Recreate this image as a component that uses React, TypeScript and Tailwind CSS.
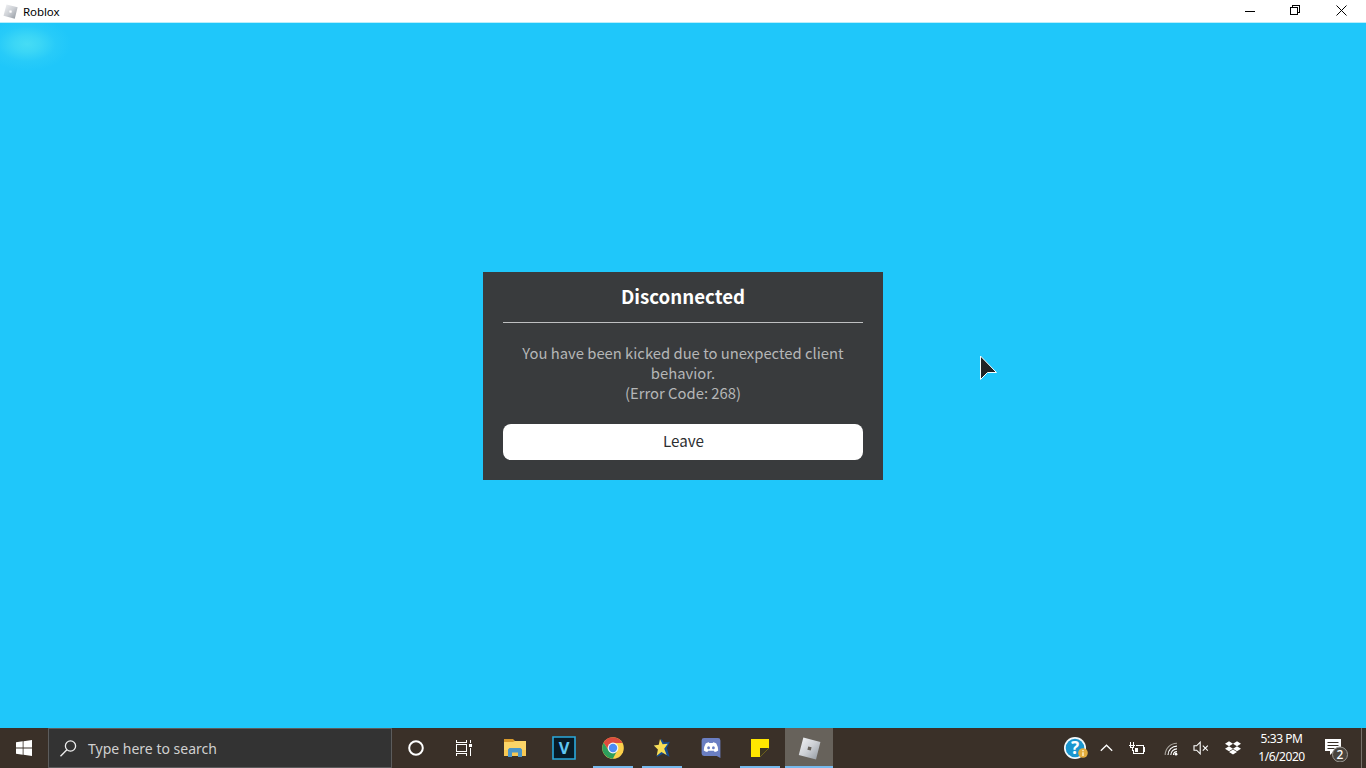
import type { ReactNode } from "react";

interface TaskItemProps {
  children: ReactNode;
  running?: boolean;
  active?: boolean;
}

function RobloxIcon({ size, id }: { size: number; id: string }) {
  return (
    <svg width={size} height={size} viewBox="0 0 24 24">
      <defs>
        <linearGradient id={id} x1="0" y1="0" x2="1" y2="1">
          <stop offset="0" stopColor="#f4f5f7" />
          <stop offset="0.5" stopColor="#cdd0d5" />
          <stop offset="1" stopColor="#8d949c" />
        </linearGradient>
      </defs>
      <path
        fillRule="evenodd"
        fill={`url(#${id})`}
        d="M5.6.6 23.4 5.2 18.8 23.4.8 18.8ZM10.7 9.8 9.8 13.3 13.3 14.2 14.2 10.7Z"
      />
    </svg>
  );
}

function TitleBar() {
  return (
    <header className="flex h-[23px] shrink-0 items-center justify-between border-b border-[#b9eefb] bg-white">
      <div className="flex items-center gap-[5px] pt-px pl-[3px]">
        <RobloxIcon size={15} id="title-logo" />
        <span className="text-[11.5px] leading-[22px] tracking-[-0.1px] text-black">Roblox</span>
      </div>
      <div className="flex h-full text-black">
        <button className="flex h-[21px] w-[46px] items-center justify-center">
          <svg width="10" height="10" shapeRendering="crispEdges">
            <path d="M0 5.5H10" stroke="currentColor" />
          </svg>
        </button>
        <button className="flex h-5 w-[44px] items-center justify-center">
          <svg width="10" height="10" fill="none" stroke="currentColor" shapeRendering="crispEdges">
            <path d="M.5 2.5H7.5V9.5H.5ZM2.5 2.5V.5H9.5V7.5H7.5" />
          </svg>
        </button>
        <button className="flex h-[21px] w-[49px] items-center justify-center">
          <svg width="11" height="11" fill="none" stroke="currentColor">
            <path d="m.5.5 10 10m0-10-10 10" />
          </svg>
        </button>
      </div>
    </header>
  );
}

function DisconnectDialog() {
  return (
    <section className="h-[208px] w-[400px] bg-[#393b3d] px-5 text-center font-['Noto_Sans_CJK_SC',sans-serif]">
      <h1 className="h-[51px] border-b border-[#bfc0c1] text-[18.7px] leading-[48px] font-bold text-white">
        Disconnected
      </h1>
      <p className="mt-5 text-[14.8px] leading-5 text-[#b5b6b7]">
        <span className="whitespace-nowrap">You have been kicked due to unexpected client</span>
        <br />
        behavior.
        <br />
        (Error Code: 268)
      </p>
      <button className="mt-[21px] h-9 w-full rounded-lg bg-white pb-[3px] pl-px text-[15.2px] leading-8 text-[#2c2e30]">
        Leave
      </button>
    </section>
  );
}

function Cursor() {
  return (
    <svg className="absolute top-[354px] left-[979px]" width="20" height="28" viewBox="0 0 20 28">
      <path d="M1.5 2v23.5L8.5 18.5H17.5Z" fill="#202426" stroke="#f4ffff" />
    </svg>
  );
}

function TaskItem({ children, running, active }: TaskItemProps) {
  return (
    <button
      className={`flex h-10 w-12 flex-col items-center ${active ? "bg-[#67625b]" : ""}`}
    >
      <span className="flex h-[38px] items-center justify-center pt-0.5">{children}</span>
      {(running || active) && (
        <span className={`h-0.5 bg-[#76b9ed] ${active ? "w-12" : "w-10"}`} />
      )}
    </button>
  );
}

function ExplorerIcon() {
  return (
    <svg width="22" height="20" viewBox="0 0 22 20">
      <path d="M0 1h9l2 2h11v6H0Z" fill="#d99a2b" />
      <path d="M0 4h9l2-1h11v15H0Z" fill="#fbd568" />
      <path d="M0 12h22v6H0Z" fill="#f7c854" />
      <path d="M4 19v-7.5L5.5 10h11l1.5 1.5V19h-4v-4.5H8V19Z" fill="#4b96c9" />
    </svg>
  );
}

function ChromeIcon() {
  return (
    <svg width="22" height="22" viewBox="0 0 22 22">
      <circle cx="11" cy="11" r="10.8" fill="#fcd04b" />
      <path d="M1.6 5.7A10.8 10.8 0 0 1 20.5 6H11L6.7 13.5Z" fill="#dd4b3e" />
      <path d="M1.6 5.7 6.7 13.5 11 16l4.3-2.5L10.8 21.8A10.8 10.8 0 0 1 1.6 5.7Z" fill="#2d9e5c" />
      <circle cx="11" cy="11" r="5.4" fill="#f5f5f5" />
      <circle cx="11" cy="11" r="4.2" fill="#4c8bf5" />
    </svg>
  );
}

function StarIcon() {
  return (
    <svg width="18" height="20" viewBox="0 0 18 20">
      <path d="M8.5.8 11 4.6 17 3.8 13.8 9.9 16.6 19 10.5 15.6 4 19 5.4 11.5 1 7.5 6.5 6.8Z" fill="#164c91" />
      <path d="m7 1 2.6 5.3 5.2-.6-3.6 5 2.5 6.2-5.3-3-4.7 3.8 1.2-6.3L.8 7.5l5-.8Z" fill="#f8dd54" />
    </svg>
  );
}

function DiscordIcon() {
  return (
    <svg width="20" height="20" viewBox="0 0 20 20">
      <path d="M3 0h14a2.4 2.4 0 0 1 2.4 2.4V20l-3.6-2H3A2.4 2.4 0 0 1 .6 15.6V2.4A2.4 2.4 0 0 1 3 0Z" fill="#6b7fc3" />
      <path
        d="M4.7 5.4Q6 4.4 7.8 4.2l.5.8h3.4l.5-.8q1.8.2 3.1 1.2Q17.4 9 17.2 12.5q-1.5 1.3-3.5 1.5l-.8-1.2H7.1L6.3 14Q4.3 13.8 2.8 12.5 2.6 9 4.7 5.4Z"
        fill="#fff"
      />
      <ellipse cx="7.6" cy="9.7" rx="1.4" ry="1.5" fill="#6b7fc3" />
      <ellipse cx="12.4" cy="9.7" rx="1.4" ry="1.5" fill="#6b7fc3" />
    </svg>
  );
}

function SearchBox() {
  return (
    <div className="flex h-10 w-[344px] items-center border border-[#5c5c5c] bg-[#333333] pl-[11px]">
      <svg width="17" height="17" viewBox="0 0 17 17" fill="none" stroke="#f0f0f0" strokeWidth="1.3">
        <circle cx="10.5" cy="6" r="5.1" />
        <path d="M6.9 9.7.5 16.2" />
      </svg>
      <span className="ml-[11px] text-[14px] whitespace-nowrap text-[#d0d0d0]">
        Type here to search
      </span>
    </div>
  );
}

function Tray() {
  return (
    <div className="ml-auto flex h-10 items-center text-white">
      <div className="flex w-[27px] justify-center">
        <svg width="25" height="24" viewBox="0 0 25 24">
          <circle cx="12" cy="12" r="11" fill="#f3fafd" />
          <circle cx="12" cy="12" r="9.3" fill="#1a96cf" />
          <text x="12" y="18" textAnchor="middle" fontSize="17" fontWeight="700" fill="#fff">?</text>
          <circle cx="20" cy="17" r="4.8" fill="#e4ad3e" />
          <path d="M20 14v1.3m0 1v3.8" stroke="#fff3ce" strokeWidth="1.4" />
        </svg>
      </div>
      <div className="flex w-[34px] justify-center">
        <svg width="13" height="8" viewBox="0 0 13 8" fill="none" stroke="currentColor" strokeWidth="1.3">
          <path d="M.8 6.8 6.5 1.2l5.7 5.6" />
        </svg>
      </div>
      <div className="flex w-[29px] justify-center">
        <svg width="17" height="13" viewBox="0 0 17 13" fill="none" stroke="currentColor" shapeRendering="crispEdges">
          <path d="M7 3.5H14.5V11.5H4.5V8M15.5 5V10" />
          <path d="M1.5 0V3M4.5 0V3M0 3.5H6M1.5 3.5V5.5H4.5V3.5M3.5 6V8.5" />
          <path d="M6 6h3v4H6Z" fill="currentColor" stroke="none" />
        </svg>
      </div>
      <div className="flex w-[37px] justify-center pt-0.5">
        <svg width="14" height="14" viewBox="0 0 14 14" fill="none" stroke="currentColor" strokeWidth="1.1">
          <path d="M1.2 13A11.8 11.8 0 0 1 13 1.2" stroke="#aaa59f" />
          <path d="M4 13A9 9 0 0 1 13 4.1M6.8 13A6.2 6.2 0 0 1 13 6.9M9.4 13a3.6 3.6 0 0 1 3.6-3.4" />
          <circle cx="12" cy="12.2" r="1.4" fill="currentColor" stroke="none" />
        </svg>
      </div>
      <div className="flex w-[23px] justify-center">
        <svg width="16" height="14" viewBox="0 0 16 14" fill="none" stroke="currentColor" strokeWidth="1.1">
          <path d="M1 4.8h2.6L7.2 1.2v11.6L3.6 9.2H1Z" />
          <path d="m9.8 4.7 5 5m0-5-5 5" />
        </svg>
      </div>
      <div className="flex w-[42px] justify-center">
        <svg width="16" height="14" viewBox="0 0 16 14" fill="currentColor">
          <path d="m4 .2 4 2.5-4 2.5-4-2.5ZM12 .2l4 2.5-4 2.5-4-2.5ZM4 5.2l4 2.5-4 2.5-4-2.5ZM12 5.2l4 2.5-4 2.5-4-2.5ZM4 11l4-2.5 4 2.5-4 2.6Z" />
        </svg>
      </div>
      <div className="flex w-[55px] flex-col pb-px text-center text-[12px] leading-[18px] tracking-[-0.45px] whitespace-nowrap">
        <span>5:33 PM</span>
        <span>1/6/2020</span>
      </div>
      <div className="flex w-[52px] justify-center pl-px">
        <svg width="26" height="28" viewBox="0 0 26 28">
          <path d="M2 5h16v12H11l-4 4v-4H2Z" fill="#fff" />
          <path d="M4.5 8.5h11M4.5 11.5h11M4.5 14.5h7" stroke="#3a3128" />
          <circle cx="17" cy="20.5" r="7.5" fill="#49443d" stroke="#9b9893" />
          <text x="17" y="24.7" textAnchor="middle" fontSize="12" fontWeight="500" fill="#fff">2</text>
        </svg>
      </div>
      <div className="mr-1 h-10 w-px bg-[#77716a]" />
    </div>
  );
}

function Taskbar() {
  return (
    <footer className="flex h-10 shrink-0 bg-[#3a3028]">
      <button className="flex w-12 items-center justify-center">
        <svg width="16" height="16" viewBox="0 0 16 16" fill="#fff">
          <path d="M0 2.2 6.7 1.3v6.2H0ZM7.5 1.2 16 0v7.5H7.5ZM0 8.4h6.7v6.3L0 13.8ZM7.5 8.4H16V16l-8.5-1.2Z" />
        </svg>
      </button>
      <SearchBox />
      <TaskItem>
        <svg width="16" height="16" fill="none" stroke="#fff" strokeWidth="2">
          <circle cx="8" cy="8" r="6.8" />
        </svg>
      </TaskItem>
      <TaskItem>
        <svg width="16" height="16" viewBox="0 0 16 16" fill="none" stroke="#fff" shapeRendering="crispEdges">
          <path d="M.5 4.5H10.5V11.5H.5ZM.5 0V2.5H10.5V0M.5 16V13.5H10.5V16M14.5 0V3M14.5 8V16" />
          <path d="M13 4h3v3h-3Z" fill="#fff" stroke="none" />
        </svg>
      </TaskItem>
      <div className="ml-[3px] flex gap-px">
        <TaskItem>
          <ExplorerIcon />
        </TaskItem>
        <TaskItem>
          <svg width="24" height="24" viewBox="0 0 24 24">
            <path d="M1 1h22v22H1Z" fill="#071b27" stroke="#2aa9dc" strokeWidth="1.6" />
            <text x="12" y="18" textAnchor="middle" fontSize="16.5" fontWeight="700" fill="#60c6f2">V</text>
          </svg>
        </TaskItem>
        <TaskItem running>
          <ChromeIcon />
        </TaskItem>
        <TaskItem running>
          <StarIcon />
        </TaskItem>
        <TaskItem>
          <DiscordIcon />
        </TaskItem>
        <TaskItem running>
          <svg width="18" height="18">
            <path d="M0 0h18v9l-9 9H0Z" fill="#ffe600" />
            <path d="M9 9h9l-9 9Z" fill="#3b3422" />
          </svg>
        </TaskItem>
        <TaskItem active>
          <RobloxIcon size={23} id="task-logo" />
        </TaskItem>
      </div>
      <Tray />
    </footer>
  );
}

export default function App() {
  return (
    <div className="relative flex h-screen w-screen flex-col overflow-hidden font-['Noto_Sans',sans-serif]">
      <TitleBar />
      <main className="flex flex-1 items-center justify-center bg-[#1fc7fa] bg-[radial-gradient(ellipse_44px_27px_at_27px_21px,#46dcf5_0%,#3bd6f6_30%,#27cbf9_65%,transparent_100%)]">
        <DisconnectDialog />
      </main>
      <Taskbar />
      <Cursor />
    </div>
  );
}
